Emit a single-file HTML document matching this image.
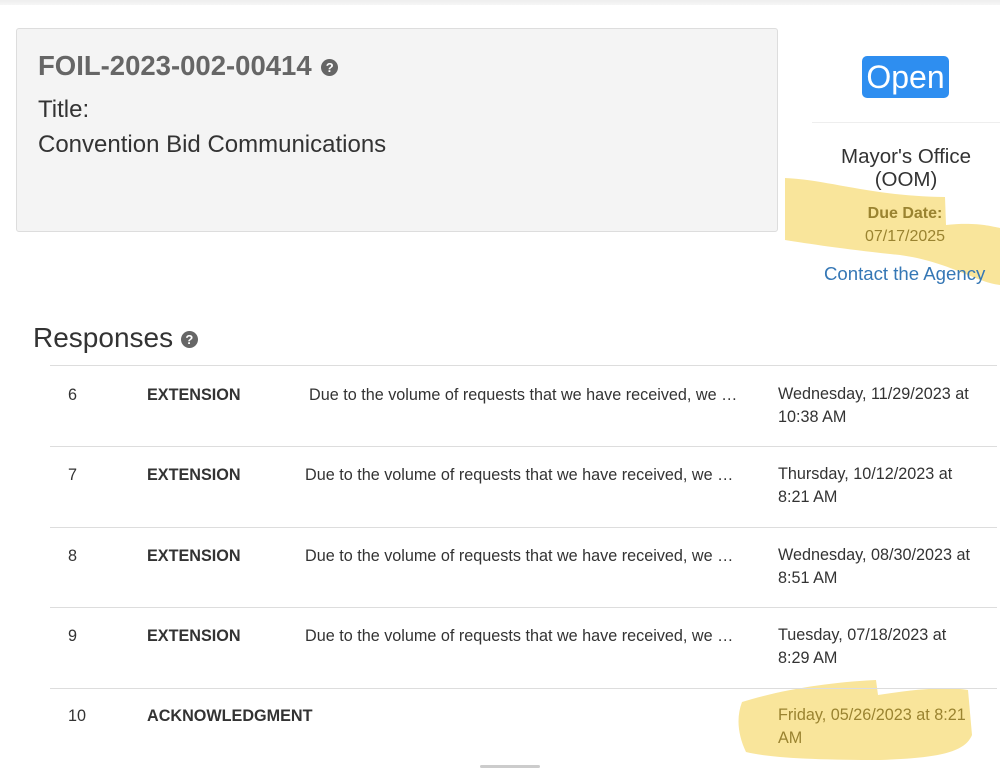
<!DOCTYPE html>
<html><head><meta charset="utf-8"><style>
*{margin:0;padding:0;box-sizing:border-box}
body{width:1000px;height:768px;overflow:hidden;background:#fff;font-family:"Liberation Sans",sans-serif;color:#333;position:relative}
.a{position:absolute;white-space:nowrap}
.q{display:inline-block;width:17px;height:17px;border-radius:50%;background:#666;color:#fff;font-size:13px;font-weight:bold;text-align:center;line-height:17px;vertical-align:middle}
.line{position:absolute;left:50px;width:947px;height:1px;background:#ddd}
.row{font-size:16.2px;color:#333}
</style></head><body>
<div class="a" style="left:0;top:0;width:1000px;height:5px;background:linear-gradient(#eee,#f6f6f6)"></div>
<div class="a" style="left:16px;top:28px;width:762px;height:204px;background:#f4f4f4;border:1px solid #ddd;border-radius:3px"></div>
<div class="a" style="left:38px;top:50px;font-size:27.5px;font-weight:bold;color:#666">FOIL-2023-002-00414 <span class="q" style="margin-left:2px">?</span></div>
<div class="a" style="left:38px;top:96px;font-size:24px;color:#333">Title:</div>
<div class="a" style="left:38px;top:131px;font-size:24px;color:#333">Convention Bid Communications</div>

<div class="a" style="left:862px;top:56px;width:87px;height:42px;background:#2e8ef0;border-radius:5px;color:#fff;font-size:32px;text-align:center;line-height:42px">Open</div>
<div class="a" style="left:812px;top:122px;width:188px;height:1px;background:#eee"></div>

<svg class="a" style="left:0;top:0" width="1000" height="768">
<path d="M785 178 C830 180 870 196 945 197 L946 225 C975 222 990 226 1000 228 L1000 285 C975 282 950 262 900 255 C850 250 810 244 785 240 Z" fill="#f9e59b"/>
<path d="M742 702 C780 690 830 682 876 680 L878 695 C910 690 945 686 968 690 L972 735 C965 752 940 758 880 760 C820 760 770 758 746 752 C738 735 736 718 742 702 Z" fill="#f9e59b"/>
</svg>

<div class="a" style="left:812px;top:145px;width:188px;text-align:center;font-size:20.5px;line-height:23px;color:#333">Mayor's Office<br>(OOM)</div>
<div class="a" style="left:812px;top:205px;width:186px;text-align:center;font-size:16px;font-weight:bold;color:#9a8330">Due Date:</div>
<div class="a" style="left:812px;top:228px;width:186px;text-align:center;font-size:16px;color:#9a8330">07/17/2025</div>
<div class="a" style="left:824px;top:263px;font-size:18.6px;color:#3577b5">Contact the Agency</div>

<div class="a" style="left:33px;top:322px;font-size:28px;color:#333">Responses <span class="q" style="font-size:13px">?</span></div>

<div class="line" style="top:365px"></div>
<div class="line" style="top:446px"></div>
<div class="line" style="top:527px"></div>
<div class="line" style="top:607px"></div>
<div class="line" style="top:688px"></div>

<div class="a row" style="left:68px;top:386px">6</div>
<div class="a row" style="left:147px;top:386px;font-weight:bold">EXTENSION</div>
<div class="a row" style="left:309px;top:386px">Due to the volume of requests that we have received, we …</div>
<div class="a row" style="left:778px;top:383px;line-height:23px">Wednesday, 11/29/2023 at<br>10:38 AM</div>

<div class="a row" style="left:68px;top:466px">7</div>
<div class="a row" style="left:147px;top:466px;font-weight:bold">EXTENSION</div>
<div class="a row" style="left:305px;top:466px">Due to the volume of requests that we have received, we …</div>
<div class="a row" style="left:778px;top:463px;line-height:23px">Thursday, 10/12/2023 at<br>8:21 AM</div>

<div class="a row" style="left:68px;top:547px">8</div>
<div class="a row" style="left:147px;top:547px;font-weight:bold">EXTENSION</div>
<div class="a row" style="left:305px;top:547px">Due to the volume of requests that we have received, we …</div>
<div class="a row" style="left:778px;top:544px;line-height:23px">Wednesday, 08/30/2023 at<br>8:51 AM</div>

<div class="a row" style="left:68px;top:627px">9</div>
<div class="a row" style="left:147px;top:627px;font-weight:bold">EXTENSION</div>
<div class="a row" style="left:305px;top:627px">Due to the volume of requests that we have received, we …</div>
<div class="a row" style="left:778px;top:624px;line-height:23px">Tuesday, 07/18/2023 at<br>8:29 AM</div>

<div class="a row" style="left:68px;top:707px">10</div>
<div class="a row" style="left:147px;top:707px;font-weight:bold">ACKNOWLEDGMENT</div>
<div class="a row" style="left:778px;top:704px;line-height:23px;color:#9a8330">Friday, 05/26/2023 at 8:21<br>AM</div>
<div class="a" style="left:480px;top:765px;width:60px;height:3px;background:#ccc;border-radius:2px"></div>
</body></html>
